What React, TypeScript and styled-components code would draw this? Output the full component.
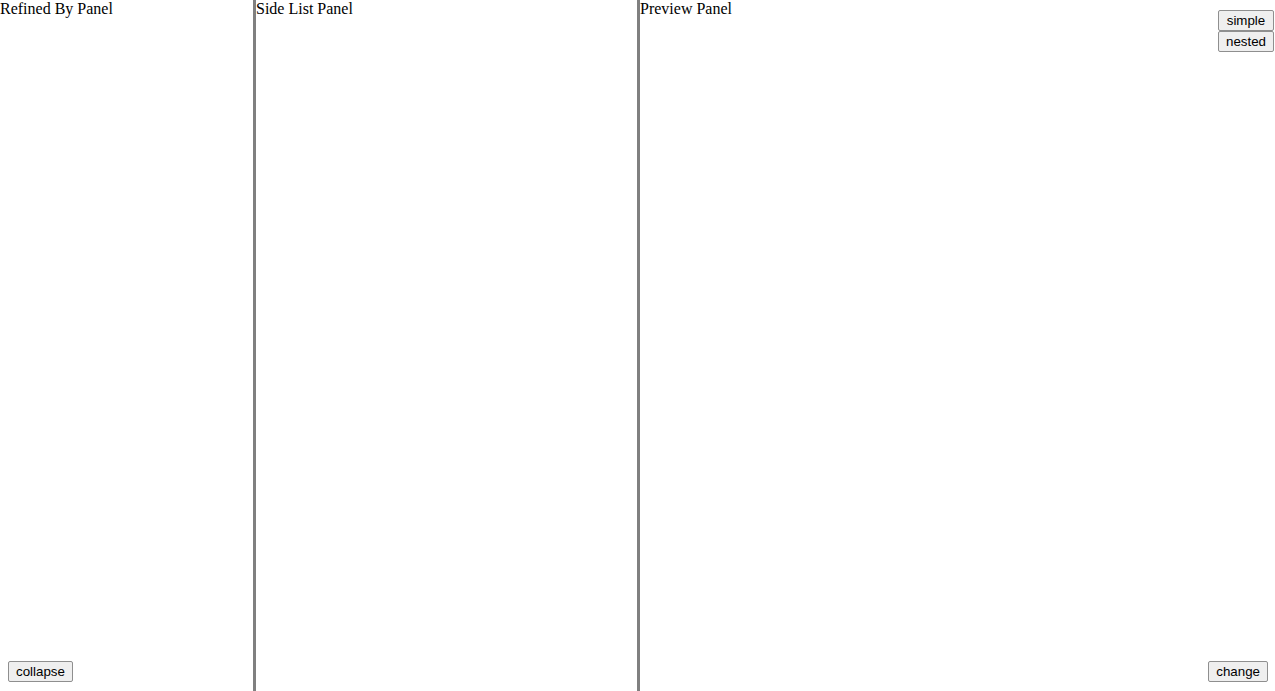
import React from "react";
import styled, { createGlobalStyle } from "styled-components";

const Global = createGlobalStyle`
  html, body { margin: 0; padding: 0; height: 100%; background: #fff; }
  body { font-family: "Liberation Serif", "Times New Roman", serif; font-size: 16px; color: #000; }
  #root { height: 100%; }
`;

const Layout = styled.div`
  display: flex;
  height: 100vh;
  width: 100%;
`;

const Panel = styled.section<{ $width?: number; $divider?: boolean }>`
  display: flex;
  flex-direction: column;
  box-sizing: content-box;
  ${(p) => (p.$width ? `width: ${p.$width}px; flex: 0 0 auto;` : "flex: 1 1 auto;")}
  ${(p) => (p.$divider ? "border-right: 3px solid #808080;" : "")}
  min-width: 0;
`;

const Header = styled.div`
  display: flex;
  justify-content: space-between;
  align-items: flex-start;
`;

const Title = styled.div`
  line-height: 18px;
`;

const ButtonStack = styled.div`
  display: flex;
  flex-direction: column;
  align-items: stretch;
  margin-top: 10px;
  margin-right: 1px;
`;

const Spacer = styled.div`
  flex: 1 1 auto;
`;

const Footer = styled.div<{ $align: "start" | "end" }>`
  display: flex;
  justify-content: ${(p) => (p.$align === "end" ? "flex-end" : "flex-start")};
  padding: 0 7px 9px 8px;
`;

const Button = styled.button`
  box-sizing: border-box;
  height: 21px;
  padding: 1px 7px;
  font-family: "Liberation Sans", Arial, sans-serif;
  font-size: 13.33px;
  color: #000;
  background: #efefef;
  border: 1px solid #8f8f8f;
  border-radius: 2px;
  cursor: pointer;
  &:hover { background: #e5e5e5; }
`;

export default function App() {
  return (
    <>
      <Global />
      <Layout>
        <Panel $width={253} $divider>
          <Header>
            <Title>Refined By Panel</Title>
          </Header>
          <Spacer />
          <Footer $align="start">
            <Button>collapse</Button>
          </Footer>
        </Panel>
        <Panel $width={381} $divider>
          <Header>
            <Title>Side List Panel</Title>
          </Header>
          <Spacer />
        </Panel>
        <Panel>
          <Header>
            <Title>Preview Panel</Title>
            <ButtonStack>
              <Button>simple</Button>
              <Button>nested</Button>
            </ButtonStack>
          </Header>
          <Spacer />
          <Footer $align="end">
            <Button>change</Button>
          </Footer>
        </Panel>
      </Layout>
    </>
  );
}
